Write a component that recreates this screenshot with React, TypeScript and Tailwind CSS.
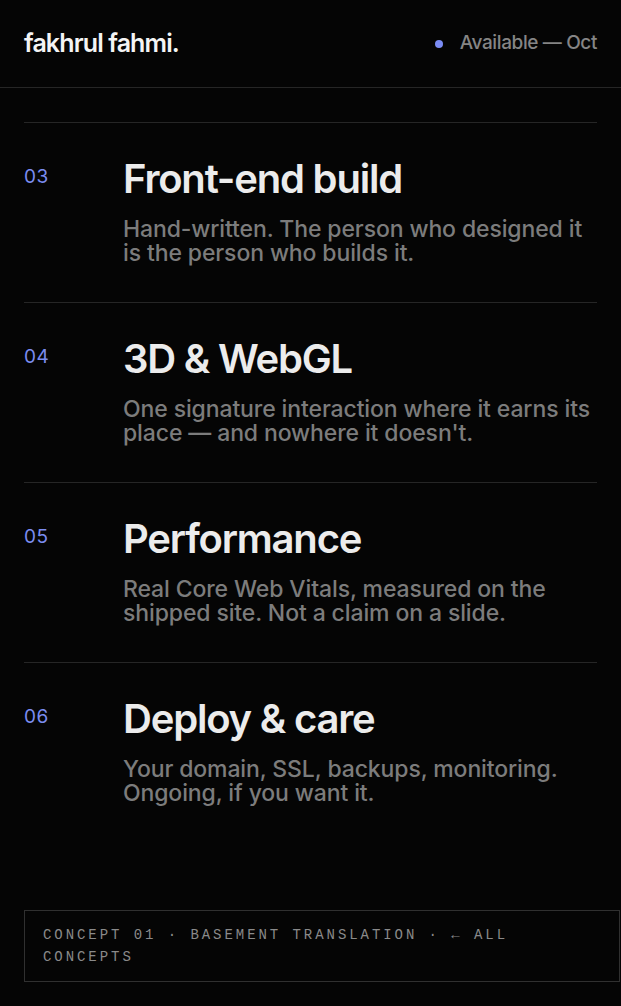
const services = [
  {
    n: '03',
    title: 'Front-end build',
    body: 'Hand-written. The person who designed it is the person who builds it.',
  },
  {
    n: '04',
    title: '3D & WebGL',
    body: "One signature interaction where it earns its place — and nowhere it doesn't.",
  },
  {
    n: '05',
    title: 'Performance',
    body: 'Real Core Web Vitals, measured on the shipped site. Not a claim on a slide.',
  },
  {
    n: '06',
    title: 'Deploy & care',
    body: 'Your domain, SSL, backups, monitoring. Ongoing, if you want it.',
  },
]

export default function App() {
  return (
    <div
      className="min-h-[1006px] bg-[#050505] text-[#ececec]"
      style={{ fontFamily: 'Inter, "Noto Sans", sans-serif' }}
    >
      <header className="flex h-[88px] items-center justify-between border-b border-[#262626] px-6">
        <span className="text-[25px] font-semibold tracking-[-0.035em] text-[#f4f4f4]">
          fakhrul fahmi.
        </span>
        <span className="flex items-center gap-[17px] text-[19px] font-medium tracking-[-0.02em] text-[#858585]">
          <span className="h-2 w-2 rounded-full bg-[#7b8cf5]" />
          Available — Oct
        </span>
      </header>

      <main className="px-6 pt-[34px]">
        {services.map((s) => (
          <section
            key={s.n}
            className="grid h-[180px] grid-cols-[99px_1fr] border-t border-[#262626] pt-[36px]"
          >
            <span className="mt-[6px] text-[19px] leading-6 tracking-[0.03em] text-[#7b8cf0]">
              {s.n}
            </span>
            <div>
              <h2 className="text-[40px] font-semibold leading-[40px] tracking-[-0.03em] text-[#ececec]">
                {s.title}
              </h2>
              <p className="mt-[18px] text-[23px] font-medium leading-6 tracking-[-0.005em] text-[#7c7c7c]">
                {s.body}
              </p>
            </div>
          </section>
        ))}
      </main>

      <div className="ml-6 mr-px mt-[68px] border border-[#303030] px-[18px] py-[13px]">
        <p
          className="text-[14px] uppercase leading-[22px] tracking-[0.21em] text-[#8a8a8a]"
          style={{ fontFamily: '"Liberation Mono", monospace' }}
        >
          Concept 01 · Basement translation · ← All concepts
        </p>
      </div>
    </div>
  )
}
